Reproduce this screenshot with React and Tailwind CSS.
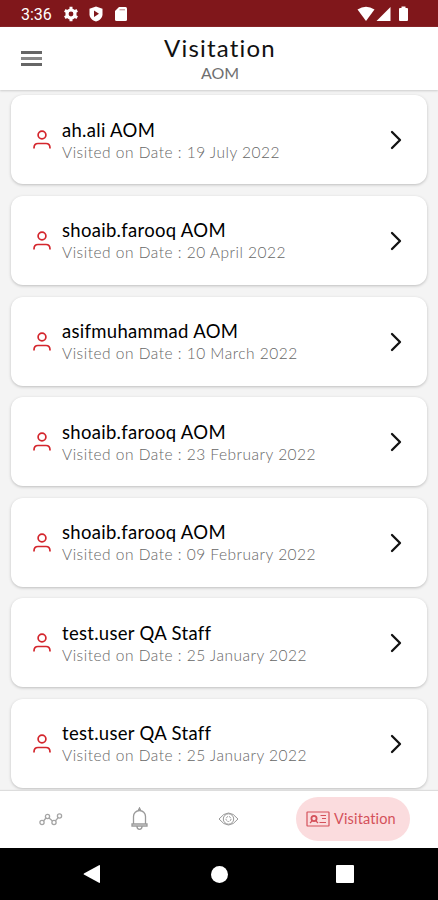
const visits = [
  { name: 'ah.ali AOM', date: '19 July 2022' },
  { name: 'shoaib.farooq AOM', date: '20 April 2022' },
  { name: 'asifmuhammad AOM', date: '10 March 2022' },
  { name: 'shoaib.farooq AOM', date: '23 February 2022' },
  { name: 'shoaib.farooq AOM', date: '09 February 2022' },
  { name: 'test.user QA Staff', date: '25 January 2022' },
  { name: 'test.user QA Staff', date: '25 January 2022' },
]

const StatusBar = () => (
  <div className="flex h-[27px] shrink-0 items-center bg-[#80171b] pl-[21px] pr-[29px] pt-[1px] text-white">
    <span className="w-[42px] pt-[1px] font-[Roboto] text-[16px] leading-none">3:36</span>
    <svg className="h-4 w-4" viewBox="0 0 16 16" fill="none" stroke="currentColor">
      <circle cx="8" cy="8" r="4" strokeWidth="3.2" />
      <path d="M8 .8v3M8 12.2v3M1.8 4.4l2.6 1.5M11.6 10.1l2.6 1.5M1.8 11.6l2.6-1.5M11.6 5.9l2.6-1.5" strokeWidth="3" />
    </svg>
    <svg className="ml-[9px] h-4 w-4" viewBox="0 0 16 16">
      <path d="M8 .5l6.5 2.3v5.4c0 3.5-2.7 6.2-6.5 7.3-3.8-1.1-6.5-3.8-6.5-7.3V2.8z" fill="currentColor" />
      <path d="M6 4.6l5 3.2-5 3.2z" fill="#80171b" />
    </svg>
    <svg className="ml-[10px] h-4 w-[14px]" viewBox="0 0 14 16">
      <path d="M5 1h6.5Q13 1 13 2.5v11q0 1.5-1.5 1.5h-9Q1 15 1 13.5V5z" fill="currentColor" />
      <path d="M5.5 3.8h5.5" stroke="#b98083" />
    </svg>
    <svg className="ml-auto h-4 w-[18px]" viewBox="0 0 18 16" fill="currentColor">
      <path d="M.5 3.5Q9-2 17.5 3.5L9 15z" />
    </svg>
    <svg className="ml-[1px] h-4 w-[15px]" viewBox="0 0 15 16" fill="currentColor">
      <path d="M14.5 1v14H.5z" />
    </svg>
    <svg className="ml-[7px] h-4 w-[11px]" viewBox="0 0 11 16" fill="currentColor">
      <path d="M3.5.5h4V2H9q1 0 1 1v11q0 1-1 1H2q-1 0-1-1V3q0-1 1-1h1.5z" />
    </svg>
  </div>
)

const Header = () => (
  <header className="relative z-10 flex h-[63px] shrink-0 items-center bg-white px-[21px] shadow-[0_1px_2px_#cccccc]">
    <button aria-label="Menu" className="flex w-[21px] flex-col gap-[3px]">
      <span className="h-[3px] bg-[#666]" />
      <span className="h-[3px] bg-[#888]" />
      <span className="h-[3px] bg-[#666]" />
    </button>
    <div className="flex flex-1 flex-col items-center pr-[19px] pt-[2px]">
      <h1 className="text-[24px] leading-[26px] tracking-[1.2px] text-[#111]">Visitation</h1>
      <p className="text-[16px] leading-[23px] text-[#6f6f6f]">AOM</p>
    </div>
  </header>
)

const VisitCard = ({ visit }) => (
  <li className="flex h-[89px] shrink-0 items-center rounded-[12px] bg-white pl-[22px] pr-[25px] pt-[1px] shadow-[0_1px_3px_#bdbdbd]">
    <svg className="h-5 w-[18px]" viewBox="0 0 18 20" fill="none" stroke="#d4262d" strokeWidth="1.7">
      <circle cx="9" cy="5" r="3.9" />
      <path d="M1 18.500v-.5Q1 13.500 5 13.500h8q4 0 4 4.500v.5" />
    </svg>
    <div className="ml-[11px] flex-1 pt-[1px]">
      <div className="text-[18.5px] leading-[22px] tracking-[0.3px] text-black">{visit.name}</div>
      <div className="text-[15.5px] font-light leading-[22px] tracking-[0.5px] text-[#666]">Visited on Date : {visit.date}</div>
    </div>
    <svg className="h-5 w-3" viewBox="0 0 12 20" fill="none" stroke="#111" strokeWidth="2.3" strokeLinecap="round" strokeLinejoin="round">
      <path d="M2 2l8 8-8 8" />
    </svg>
  </li>
)

const BottomNav = () => (
  <nav className="relative z-10 flex h-[57px] shrink-0 items-center bg-white pb-[1px] pl-[39px] pr-[28px] shadow-[0_-1px_1px_#ddd]">
    <svg className="h-[14px] w-6" viewBox="0 0 24 14" fill="none" stroke="#a5a5a5" strokeWidth="1.3">
      <circle cx="3" cy="10.5" r="2.1" />
      <circle cx="8.5" cy="4.5" r="2.1" />
      <circle cx="15" cy="10.5" r="2.1" />
      <circle cx="20.5" cy="4" r="2.1" />
      <path d="M4.5 9L7 6M10 6l3.5 3M16.3 9l2.900-3.400" />
    </svg>
    <svg className="ml-[68px] h-6 w-[17px]" viewBox="0 0 17 24" fill="none" stroke="#9a9a9a" strokeWidth="1.3">
      <path d="M2.500 17V9.500a6 6 0 0112 0V17M1 17h15v2H1zM7.300 3.500L8.500 1l1.200 2.500M6 19.500q0 2.800 2.500 2.800t2.500-2.800" />
    </svg>
    <svg className="ml-[70px] h-[14px] w-[21px]" viewBox="0 0 21 14" fill="none" stroke="#999">
      <path d="M1 7Q10.500-5 20 7 10.500 19 1 7z" />
      <circle cx="10.500" cy="7" r="5.200" />
      <circle cx="10.500" cy="7" r="2.500" strokeDasharray="2 1" />
    </svg>
    <button className="ml-auto flex h-[44px] w-[114px] items-center rounded-full bg-[#fbdcde] pl-[10px] text-[#d4515a]">
      <svg className="h-4 w-[24px]" viewBox="0 0 24 16" fill="none" stroke="currentColor" strokeWidth="1.2">
        <rect x="1" y="1" width="22" height="14" rx=".5" />
        <circle cx="8" cy="7.5" r="2.6" strokeWidth="1.8" />
        <path d="M4 12l2-2M12 12l-2-2M14.5 4.5H20M16 7.5h4M13.5 11.5H20" />
      </svg>
      <span className="ml-[4px] text-[14.5px] tracking-[0.15px]">Visitation</span>
    </button>
  </nav>
)

const SystemNav = () => (
  <div className="flex h-[52px] shrink-0 items-center bg-black pl-[83px] pr-[84px] text-white">
    <svg className="h-[18px] w-[18px]" viewBox="0 0 18 18" fill="currentColor">
      <path d="M1.3 8.2L16 .2q1-.4 1 .8v16q0 1.2-1 .8L1.3 9.8q-1.4-.8 0-1.6z" />
    </svg>
    <span className="ml-[110px] h-[17px] w-[17px] rounded-full bg-white" />
    <span className="ml-auto h-[18px] w-[18px] rounded-[1px] bg-white" />
  </div>
)

const App = () => (
  <div className="flex h-[900px] w-[438px] flex-col overflow-hidden bg-[#f4f4f4] font-[Lato,sans-serif]">
    <StatusBar />
    <Header />
    <main className="min-h-0 flex-1 overflow-hidden">
      <ul className="flex flex-col gap-[11.6px] px-[11px] pt-[5.4px]">
        {visits.map((visit, i) => (
          <VisitCard key={i} visit={visit} />
        ))}
      </ul>
    </main>
    <BottomNav />
    <SystemNav />
  </div>
)

export default App
